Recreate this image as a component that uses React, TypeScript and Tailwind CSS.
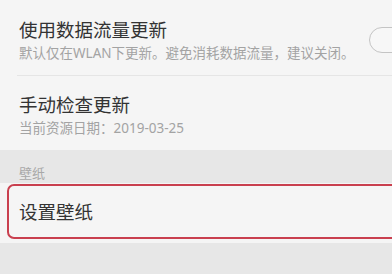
import React from 'react';

const font = { fontFamily: '"Noto Sans", "Noto Sans CJK SC", sans-serif' };

function SettingRow({ title, desc, toggle }: { title: string; desc: string; toggle?: boolean }) {
  return (
    <div className="flex items-center pl-[19px]">
      <div className="flex flex-1 flex-col gap-[2px]">
        <div className="text-[18.5px] leading-[24px] text-[#333333]">{title}</div>
        <div className="whitespace-nowrap text-[13.5px] leading-[18px] text-[#a3a3a3]">{desc}</div>
      </div>
      {toggle && (
        <div className="mr-[-28px] h-[26px] w-[51px] shrink-0 rounded-full border-[1.5px] border-[#c4c4c4] bg-[#f7f7f7]" />
      )}
    </div>
  );
}

export default function App() {
  return (
    <div className="h-[274px] w-[392px] overflow-hidden bg-[#e7e7e7]" style={font}>
      {/* update options */}
      <div className="bg-[#f5f5f5]">
        <div className="pb-[13px] pt-[18px]">
          <SettingRow title="使用数据流量更新" desc="默认仅在WLAN下更新。避免消耗数据流量，建议关闭。" toggle />
        </div>
        <div className="ml-[17px] h-px bg-[#e5e5e5]" />
        <div className="pb-[13px] pt-[17px]">
          <SettingRow title="手动检查更新" desc="当前资源日期：2019-03-25" />
        </div>
      </div>

      {/* wallpaper group */}
      <div className="h-[33px] pl-[19px] pt-[14px] text-[13px] leading-[18px] text-[#a8a8a8]">壁纸</div>
      <div className="h-[60px] bg-[#f5f5f5] pt-[1px]">
        <div className="-mr-[20px] ml-[7px] flex h-[55px] items-center rounded-[7px] border-2 border-[#c9404f] pl-[10px]">
          <span className="text-[18.5px] leading-[24px] text-[#333333]">设置壁纸</span>
        </div>
      </div>
    </div>
  );
}
